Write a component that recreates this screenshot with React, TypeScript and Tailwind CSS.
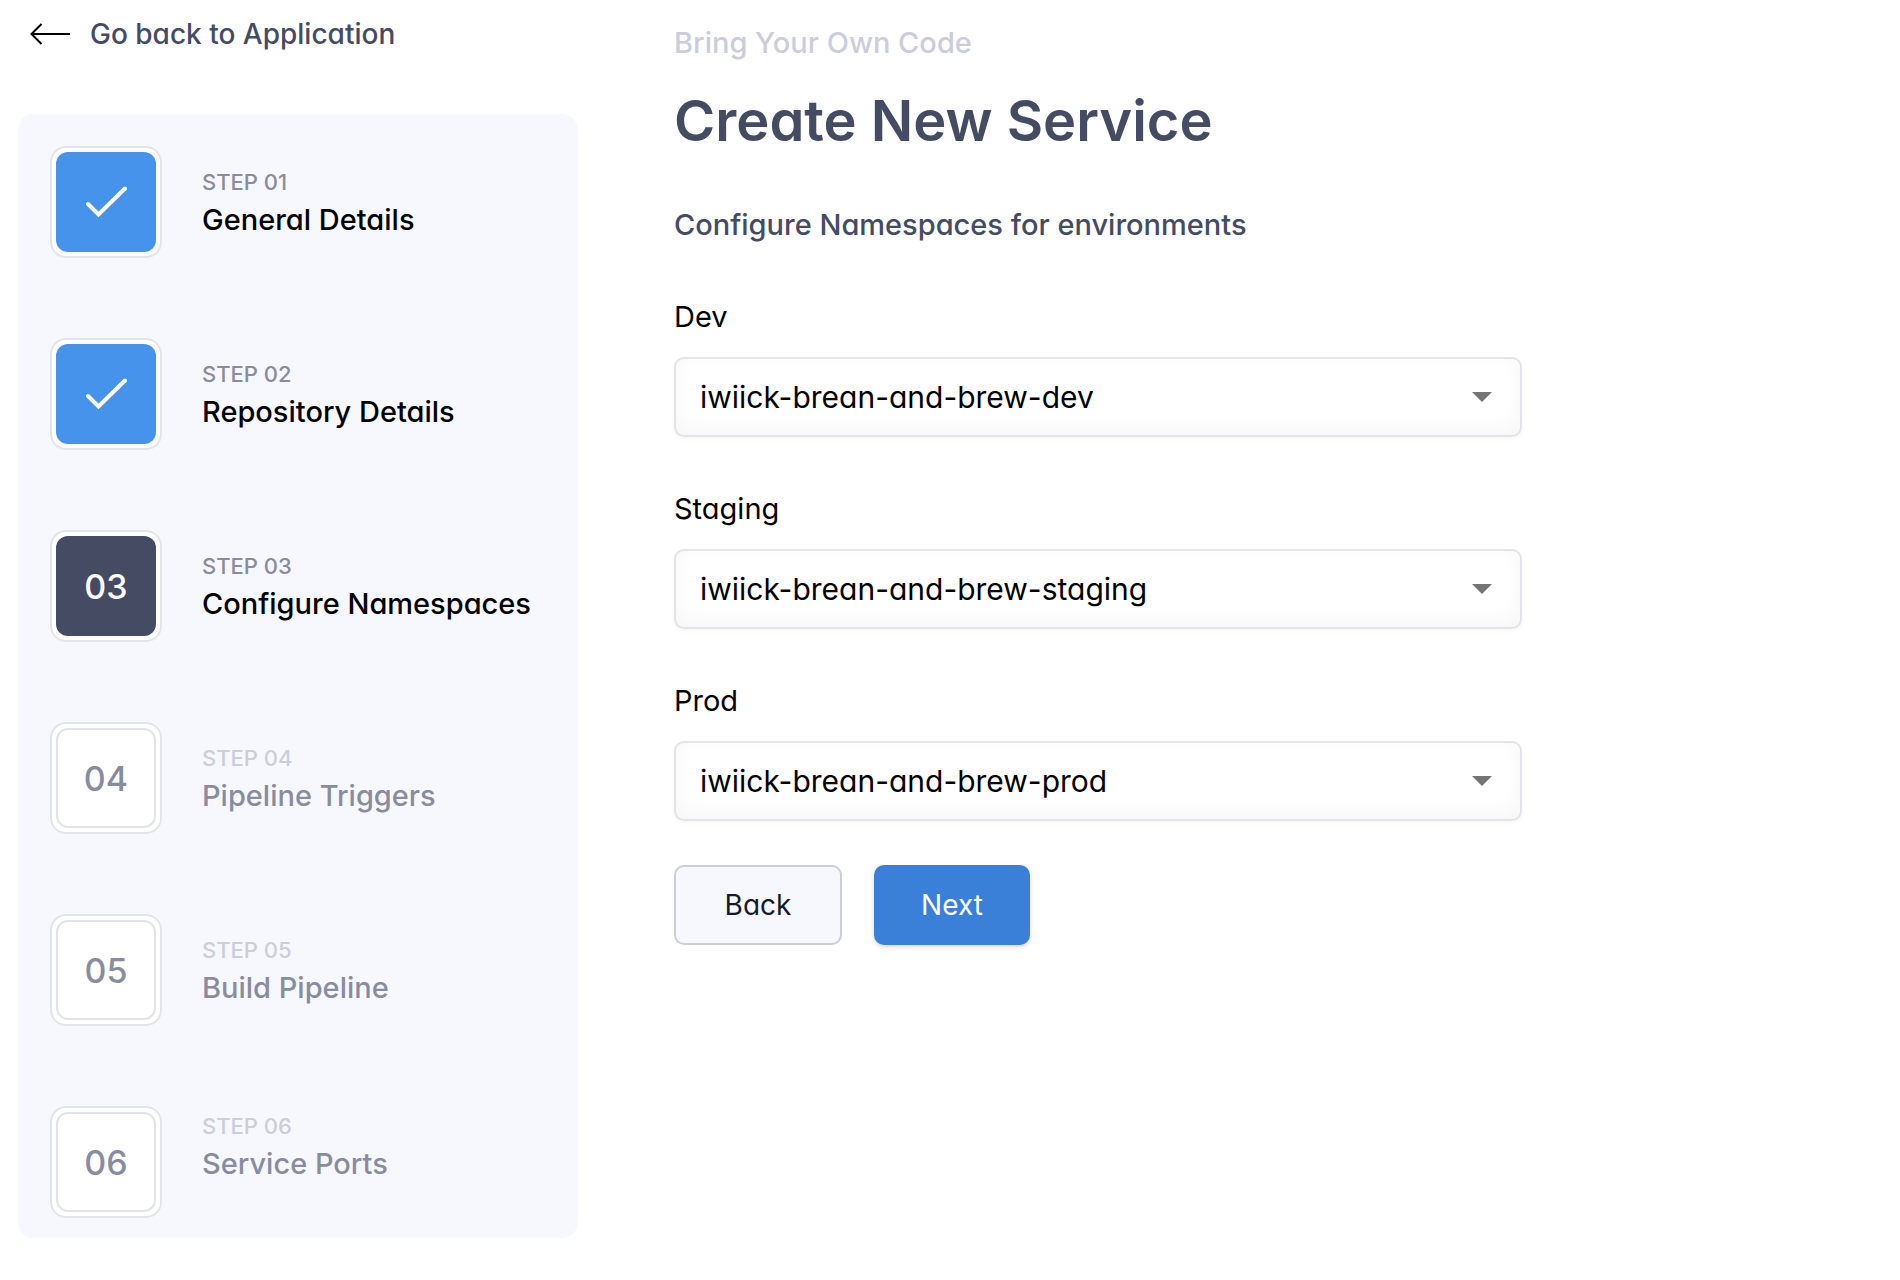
import React, { useState } from 'react';

type StepStatus = 'done' | 'current' | 'pending';

interface Step {
  number: string;
  title: string;
  status: StepStatus;
}

interface Environment {
  id: string;
  label: string;
  namespaces: string[];
}

const steps: Step[] = [
  { number: '01', title: 'General Details', status: 'done' },
  { number: '02', title: 'Repository Details', status: 'done' },
  { number: '03', title: 'Configure Namespaces', status: 'current' },
  { number: '04', title: 'Pipeline Triggers', status: 'pending' },
  { number: '05', title: 'Build Pipeline', status: 'pending' },
  { number: '06', title: 'Service Ports', status: 'pending' },
];

const environments: Environment[] = [
  { id: 'dev', label: 'Dev', namespaces: ['iwiick-brean-and-brew-dev'] },
  { id: 'staging', label: 'Staging', namespaces: ['iwiick-brean-and-brew-staging'] },
  { id: 'prod', label: 'Prod', namespaces: ['iwiick-brean-and-brew-prod'] },
];

const badgeStyles: Record<StepStatus, string> = {
  done: 'bg-[#4693eb] text-white',
  current: 'bg-[#454b63] text-white',
  pending: 'bg-white border-2 border-[#e3e4ea] text-[#898c9f]',
};

const ArrowLeftIcon = () => (
  <svg width="40" height="22" viewBox="0 0 40 22" fill="none" stroke="currentColor" strokeWidth="2" aria-hidden="true">
    <path d="M40 11H1.5M11.5 1L1.5 11l10 10" />
  </svg>
);

const CheckIcon = () => (
  <svg width="42" height="32" viewBox="0 0 42 32" fill="none" stroke="currentColor" strokeWidth="4" strokeLinecap="round" aria-hidden="true">
    <path d="M3 18L13.5 28.5L40 2.5" />
  </svg>
);

const StepItem: React.FC<{ step: Step; isLast: boolean }> = ({ step, isLast }) => {
  const pending = step.status === 'pending';

  return (
    <li className="flex items-center gap-10" aria-current={step.status === 'current' ? 'step' : undefined}>
      <div className="w-28 h-28 shrink-0 p-1 bg-white border-2 border-[#e3e4ea] rounded-2xl">
        <div className={`w-full h-full flex items-center justify-center rounded-xl text-[34px] font-medium ${badgeStyles[step.status]}`}>
          {step.status === 'done' ? <CheckIcon /> : step.number}
        </div>
      </div>
      <div className={isLast ? 'pb-8' : ''}>
        <p className={`text-[22px] leading-9 font-medium ${pending ? 'text-[#cccdda]' : 'text-[#898c9f]'}`}>
          STEP {step.number}
        </p>
        <p className={`text-[29px] leading-10 font-medium whitespace-nowrap ${pending ? 'text-[#898c9f]' : 'text-black'}`}>
          {step.title}
        </p>
      </div>
    </li>
  );
};

const NamespaceSelect: React.FC<{ environment: Environment }> = ({ environment }) => {
  const [value, setValue] = useState(environment.namespaces[0]);

  return (
    <div>
      <label htmlFor={environment.id} className="block text-[29px] leading-10 text-black">
        {environment.label}
      </label>
      <div className="relative mt-5">
        <select
          id={environment.id}
          value={value}
          onChange={(e) => setValue(e.target.value)}
          className="appearance-none w-full h-20 pl-6 pr-20 bg-white border-2 border-[#e3e4ea] rounded-[10px] text-[30px] text-black shadow-[inset_0_-6px_20px_rgba(0,0,0,0.04),0_2px_4px_rgba(0,0,0,0.04)] focus:outline-none focus:border-[#4693eb]"
        >
          {environment.namespaces.map((namespace) => (
            <option key={namespace} value={namespace}>
              {namespace}
            </option>
          ))}
        </select>
        <div className="absolute inset-y-0 right-7 flex items-center pointer-events-none text-[#757575]">
          <svg width="24" height="10" viewBox="0 0 24 10" fill="currentColor" aria-hidden="true">
            <path d="M2 0h20L12 10z" />
          </svg>
        </div>
      </div>
    </div>
  );
};

export default function App() {
  return (
    <div className="min-h-screen bg-white flex gap-24 pl-[18px] pr-12 pb-10 font-['Inter',sans-serif] [font-feature-settings:'cv11']">
      {/* Sidebar */}
      <aside className="w-[560px] shrink-0 pt-3.5">
        <a href="#application" className="inline-flex items-center gap-5 pl-3 text-[28px] leading-10 font-medium text-[#454b63]">
          <span className="text-black">
            <ArrowLeftIcon />
          </span>
          Go back to Application
        </a>
        <ol className="mt-[60px] px-8 pt-8 pb-5 flex flex-col gap-20 bg-[#f7f8fe] rounded-2xl">
          {steps.map((step, index) => (
            <StepItem key={step.number} step={step} isLast={index === steps.length - 1} />
          ))}
        </ol>
      </aside>

      {/* Form */}
      <main className="flex-1 min-w-0 max-w-[848px] pt-[21px]">
        <p className="text-[29px] leading-[44px] font-medium text-[#cccdda]">Bring Your Own Code</p>
        <h1 className="mt-5 text-[56px] leading-[72px] font-semibold text-[#454b63]">Create New Service</h1>
        <h2 className="mt-12 text-[29px] leading-10 font-medium text-[#454b63]">Configure Namespaces for environments</h2>

        <form onSubmit={(e) => e.preventDefault()} className="mt-[52px]">
          <div className="flex flex-col gap-[52px]">
            {environments.map((environment) => (
              <NamespaceSelect key={environment.id} environment={environment} />
            ))}
          </div>
          <div className="mt-11 flex gap-8">
            <button
              type="button"
              className="w-[168px] h-20 bg-[#f7f8fe] border-2 border-[#cccdda] rounded-[10px] text-[28px] text-[#15192c]"
            >
              Back
            </button>
            <button
              type="submit"
              className="w-[156px] h-20 bg-[#3b80d8] rounded-[10px] text-[28px] text-white shadow-[0_2px_4px_rgba(0,0,0,0.15)]"
            >
              Next
            </button>
          </div>
        </form>
      </main>
    </div>
  );
}
